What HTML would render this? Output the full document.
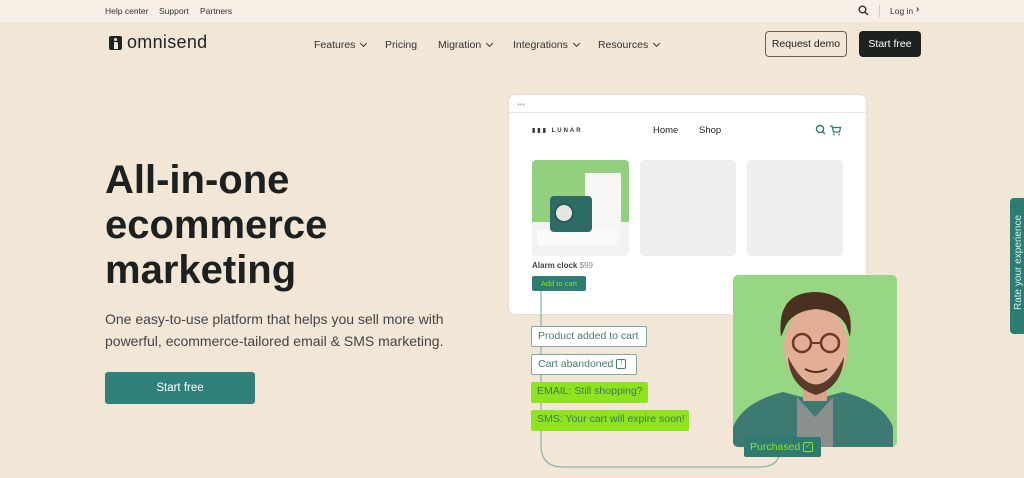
<!DOCTYPE html>
<html><head><meta charset="utf-8"><style>
*{margin:0;padding:0;box-sizing:border-box}
body{width:1024px;height:478px;overflow:hidden;background:#f2e6d6;font-family:"Liberation Sans",sans-serif;position:relative;color:#1f2321}
.a{position:absolute}
.top{left:0;top:0;width:1024px;height:22px;background:#f8f0e6;font-size:8.5px;color:#333}
.nav{font-size:10.5px;color:#333}
.chev{display:inline-block;width:5px;height:5px;border-right:1.3px solid #333;border-bottom:1.3px solid #333;transform:rotate(45deg);margin-left:6px;position:relative;top:-2px}
h1{position:absolute;left:105px;top:158px;font-size:40px;line-height:45px;font-weight:900;color:#1c201e}
.box{position:absolute;height:21px;font-size:10.5px;line-height:19px;padding-left:6px;border-radius:2px;white-space:nowrap}
.wb{border:1.3px solid #7fa8a0;background:#fff;color:#4a7a72}
.gb{background:#8fe31e;color:#3d7a55}
</style></head><body>
<div class="a top">
<span class="a" style="left:105px;top:6px">Help center</span>
<span class="a" style="left:159px;top:6px">Support</span>
<span class="a" style="left:200px;top:6px">Partners</span>
<svg class="a" style="left:858px;top:5px" width="11" height="11" viewBox="0 0 11 11"><circle cx="4.5" cy="4.5" r="3.3" fill="none" stroke="#333" stroke-width="1.4"/><path d="M7 7l3 3" stroke="#333" stroke-width="1.5"/></svg>
<div class="a" style="left:879px;top:5px;width:1px;height:12px;background:#ccc"></div>
<span class="a" style="left:890px;top:6px">Log in</span>
<span class="a" style="left:916px;top:4px;font-size:10px;font-weight:bold">›</span>
</div>
<div class="a" style="left:109px;top:36px;width:13px;height:14px;background:#1f2321;border-radius:2px"></div>
<div class="a" style="left:114px;top:38px;width:3px;height:3px;background:#f2e6d6;border-radius:50%"></div>
<div class="a" style="left:114px;top:42px;width:4px;height:7px;background:#f2e6d6;border-radius:0 2px 0 0"></div>
<div class="a" style="left:127px;top:32px;font-size:18px;color:#1f2321;letter-spacing:0.3px">omnisend</div>
<div class="a nav" style="left:314px;top:39px">Features<span class="chev"></span></div>
<div class="a nav" style="left:385px;top:39px">Pricing</div>
<div class="a nav" style="left:438px;top:39px">Migration<span class="chev"></span></div>
<div class="a nav" style="left:513px;top:39px">Integrations<span class="chev"></span></div>
<div class="a nav" style="left:598px;top:39px">Resources<span class="chev"></span></div>
<div class="a" style="left:765px;top:31px;width:82px;height:26px;border:1px solid #6b6055;border-radius:4px;font-size:10.5px;text-align:center;line-height:24px;color:#222">Request demo</div>
<div class="a" style="left:859px;top:31px;width:62px;height:26px;background:#1d2220;border-radius:4px;font-size:10.5px;text-align:center;line-height:26px;color:#fff">Start free</div>

<h1>All-in-one<br>ecommerce<br>marketing</h1>
<div class="a" style="left:105px;top:308px;font-size:14px;line-height:22px;color:#444;font-weight:300">One easy-to-use platform that helps you sell more with<br>powerful, ecommerce-tailored email &amp; SMS marketing.</div>
<div class="a" style="left:105px;top:372px;width:150px;height:32px;background:#2e8078;border-radius:3px;color:#fff;font-size:11.5px;text-align:center;line-height:32px">Start free</div>

<div class="a" style="left:509px;top:95px;width:357px;height:219px;background:#fff;border-radius:6px;box-shadow:0 0 2px rgba(0,0,0,.1)"></div>
<div class="a" style="left:509px;top:112px;width:357px;height:1px;background:#e6e6e6"></div>
<div class="a" style="left:517px;top:100px;font-size:8px;color:#bbb">•••</div>
<div class="a" style="left:532px;top:127px;font-size:6px;color:#333;letter-spacing:2px;font-weight:bold">▮▮▮ LUNAR</div>
<div class="a" style="left:653px;top:125px;font-size:9.5px;color:#222">Home</div>
<div class="a" style="left:699px;top:125px;font-size:9.5px;color:#222">Shop</div>
<svg class="a" style="left:815px;top:124px" width="28" height="12" viewBox="0 0 28 12"><circle cx="5" cy="5" r="3.5" fill="none" stroke="#2e7b72" stroke-width="1.4"/><path d="M7.5 7.5l2.5 2.5" stroke="#2e7b72" stroke-width="1.4"/><path d="M15 2h2l1.5 6h6l1-4.5h-8" fill="none" stroke="#2e7b72" stroke-width="1.3"/><circle cx="19" cy="10.5" r=".9" fill="#2e7b72"/><circle cx="24" cy="10.5" r=".9" fill="#2e7b72"/></svg>
<div class="a" style="left:532px;top:160px;width:97px;height:96px;border-radius:4px;background:#f2f2f2;overflow:hidden">
 <div class="a" style="left:0;top:0;width:97px;height:62px;background:#92cf7e"></div>
 <div class="a" style="left:53px;top:13px;width:36px;height:68px;background:#f6f6f4"></div>
 <div class="a" style="left:5px;top:70px;width:80px;height:15px;background:#fafafa"></div>
 <div class="a" style="left:18px;top:36px;width:42px;height:36px;background:#2e6b64;border-radius:4px"></div>
 <div class="a" style="left:22px;top:43px;width:20px;height:20px;background:#e6e6e0;border-radius:50%;border:2px solid #2a5a54"></div>
</div>
<div class="a" style="left:640px;top:160px;width:96px;height:96px;border-radius:4px;background:#efefef"></div>
<div class="a" style="left:747px;top:160px;width:96px;height:96px;border-radius:4px;background:#efefef"></div>
<div class="a" style="left:532px;top:261px;font-size:8px;font-weight:bold;color:#444">Alarm clock <span style="font-weight:normal;color:#888">$99</span></div>

<svg class="a" style="left:530px;top:285px" width="260" height="190" viewBox="0 0 260 190"><path d="M11 0V160q0 22 22 22H230q20 0 20-18" fill="none" stroke="#8fb5ad" stroke-width="1.3"/></svg>
<div class="a" style="left:532px;top:276px;width:54px;height:15px;background:#2e7b72;border-radius:2px;color:#8fe31e;font-size:7.5px;text-align:center;line-height:15px">Add to cart</div>
<div class="box wb" style="left:531px;top:326px;width:116px">Product added to cart</div>
<div class="box wb" style="left:531px;top:354px;width:106px">Cart abandoned <span style="display:inline-block;width:10px;height:10px;border:1.2px solid #4a7a72;border-radius:2px;font-size:7px;line-height:8px;text-align:center;vertical-align:middle">!</span></div>
<div class="box gb" style="left:531px;top:382px;width:117px">EMAIL: Still shopping?</div>
<div class="box gb" style="left:531px;top:410px;width:158px">SMS: Your cart will expire soon!</div>

<div class="a" style="left:733px;top:275px;width:164px;height:172px;background:#97d684;border-radius:5px;overflow:hidden">
<svg width="164" height="172" viewBox="0 0 164 172">
<path d="M0 152q10-25 50-35l30 8 30-8q40 10 50 35v20H0z" fill="#3c7a72"/>
<path d="M64 122l18 20 18-20v50H64z" fill="#8a8f8c"/>
<rect x="70" y="100" width="24" height="26" fill="#d9a48a"/>
<ellipse cx="83" cy="72" rx="32" ry="40" fill="#e2ae95"/>
<path d="M55 82q28 55 56 0q-2 30-28 38q-26-8-28-38z" fill="#5a3a2a"/>
<path d="M48 62q-5-45 35-45q40 2 34 45l-4-12q-8-14-30-16q-22 2-30 16z" fill="#4a3020"/>
<circle cx="69" cy="68" r="9" fill="none" stroke="#6a3a28" stroke-width="2.5"/><circle cx="97" cy="68" r="9" fill="none" stroke="#6a3a28" stroke-width="2.5"/>
<path d="M78 68h10" stroke="#6a3a28" stroke-width="2"/>
<path d="M72 94q11 6 22 0" fill="none" stroke="#4a2a1a" stroke-width="2"/>
</svg></div>
<div class="a" style="left:744px;top:437px;width:77px;height:20px;background:#2e7b72;border-radius:2px;color:#8fe31e;font-size:10.5px;line-height:20px;padding-left:6px;white-space:nowrap">Purchased <span style="display:inline-block;width:10px;height:10px;border:1.3px solid #8fe31e;border-radius:2px;font-size:7px;line-height:8px;text-align:center;vertical-align:middle">✓</span></div>

<div class="a" style="left:1010px;top:198px;width:20px;height:136px;background:#2e7b72;border-radius:4px 0 0 4px"></div>
<div class="a" style="left:1013px;top:310px;transform:rotate(-90deg);transform-origin:0 0;font-size:10px;color:#d6eee8;white-space:nowrap">Rate your experience</div>
</body></html>
